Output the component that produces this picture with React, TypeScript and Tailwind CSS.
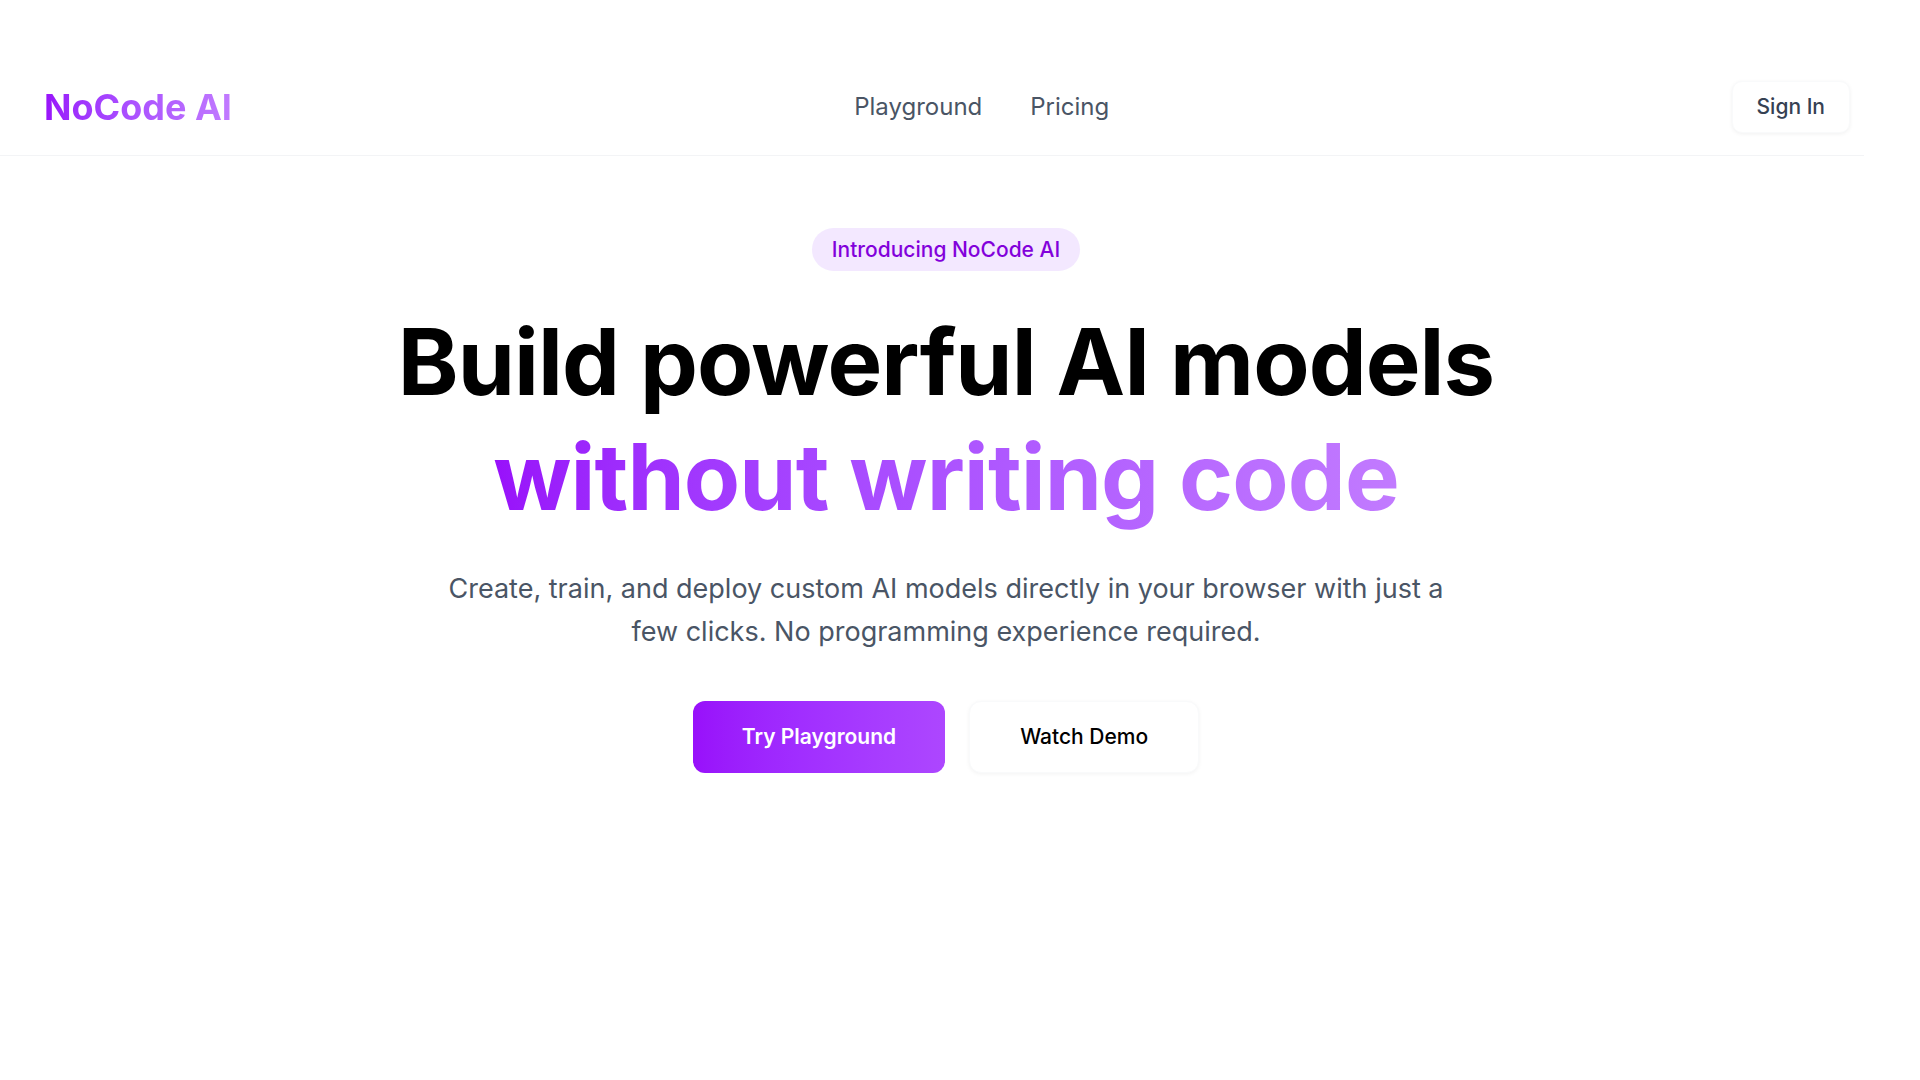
import React from 'react';

const font = { fontFamily: 'Inter, "Noto Sans", "Liberation Sans", sans-serif' };

function Header() {
  return (
    <header className="w-[1864px] flex items-center justify-between pl-[44px] pr-[14px] pt-[81px] pb-[22px] border-b border-gray-100">
      <a href="#" className="text-[36px] leading-[44px] font-bold bg-gradient-to-r from-purple-600 to-purple-400 bg-clip-text text-transparent">
        NoCode AI
      </a>
      <nav className="flex items-center gap-[48px]">
        <a href="#" className="text-[24px] text-gray-600">Playground</a>
        <a href="#" className="text-[24px] text-gray-600">Pricing</a>
      </nav>
      <button className="h-[52px] px-[24px] rounded-[10px] bg-white shadow-[0_1px_4px_rgba(0,0,0,0.06)] border border-gray-50 text-[21px] font-medium text-gray-700">
        Sign In
      </button>
    </header>
  );
}

export default function App() {
  return (
    <div style={font} className="min-h-screen bg-white text-black">
      <Header />
      <main className="w-[1892px] flex flex-col items-center pt-[72px]">
        <span className="px-5 h-[43px] flex items-center rounded-full bg-purple-100 text-purple-700 text-[21px] font-medium">
          Introducing NoCode AI
        </span>

        <h1 className="mt-[33px] text-center text-[92px] leading-[115px] font-bold tracking-[-0.01em]">
          <span className="block text-black">Build powerful AI models</span>
          <span className="inline-block bg-gradient-to-r from-purple-600 to-purple-400 bg-clip-text text-transparent">
            without writing code
          </span>
        </h1>

        <p className="mt-[33px] max-w-[1010px] text-center text-[27px] leading-[43px] text-gray-600">
          Create, train, and deploy custom AI models directly in your browser with just a few clicks. No programming experience required.
        </p>

        <div className="mt-[48px] flex gap-[24px]">
          <button className="h-[72px] px-[49px] rounded-[12px] bg-gradient-to-r from-purple-600 to-purple-500 text-white text-[21px] font-semibold">
            Try Playground
          </button>
          <button className="h-[72px] px-[50px] rounded-[12px] bg-white border border-gray-50 shadow-[0_1px_4px_rgba(0,0,0,0.05)] text-black text-[21px] font-medium">
            Watch Demo
          </button>
        </div>
      </main>
    </div>
  );
}
